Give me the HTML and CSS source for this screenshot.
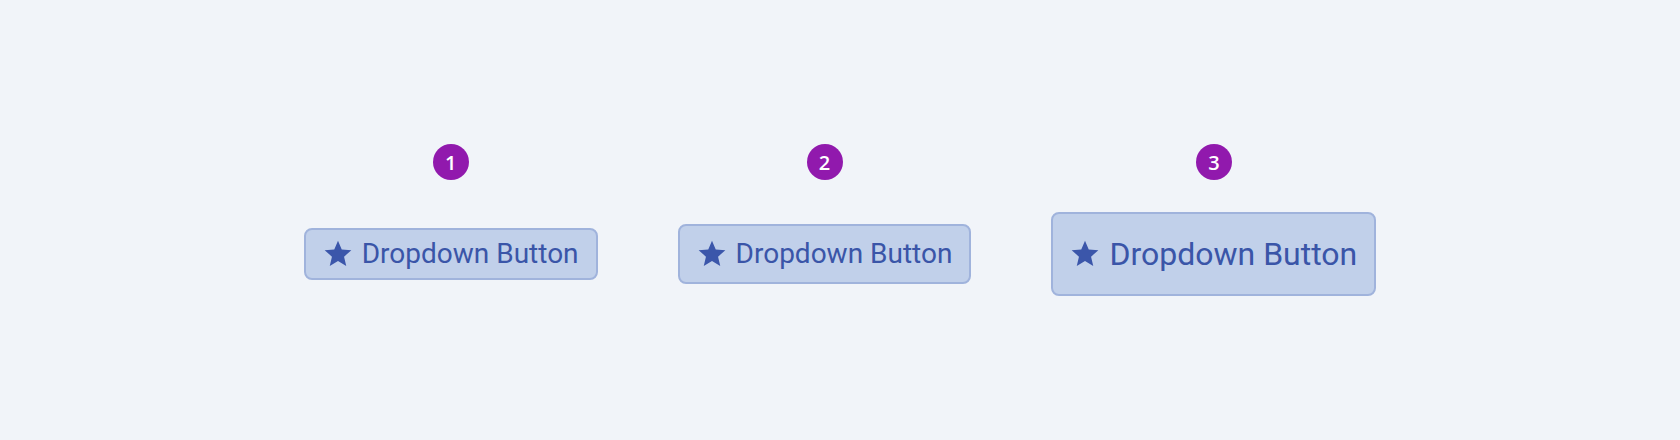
FILE: index.html
```html
<!DOCTYPE html>
<html lang="en">
<head>
    <meta charset="UTF-8">
    <meta name="viewport" content="width=device-width, initial-scale=1.0">
    <title>Dropdown Button sizes</title>
    <link rel="stylesheet" href="styles.css">
</head>
<body>
    <div class="demo">
        <span class="badge">1</span>
        <span class="badge">2</span>
        <span class="badge">3</span>

        <button class="dd-btn dd-small">
            <svg class="star" viewBox="0 0 24 24"><path d="M12 17.27L18.18 21l-1.64-7.03L22 9.24l-7.19-.61L12 2 9.19 8.63 2 9.24l5.46 4.73L5.82 21z"/></svg>
            <span>Dropdown Button</span>
        </button>
        <button class="dd-btn dd-medium">
            <svg class="star" viewBox="0 0 24 24"><path d="M12 17.27L18.18 21l-1.64-7.03L22 9.24l-7.19-.61L12 2 9.19 8.63 2 9.24l5.46 4.73L5.82 21z"/></svg>
            <span>Dropdown Button</span>
        </button>
        <button class="dd-btn dd-large">
            <svg class="star" viewBox="0 0 24 24"><path d="M12 17.27L18.18 21l-1.64-7.03L22 9.24l-7.19-.61L12 2 9.19 8.63 2 9.24l5.46 4.73L5.82 21z"/></svg>
            <span>Dropdown Button</span>
        </button>
    </div>
</body>
</html>
```
FILE: styles.css
```css
*{
    margin: 0;
    padding: 0;
    box-sizing: border-box;
}
body{
    height: 440px;
    background-color: #f1f4f9;
    display: flex;
    align-items: center;
    justify-content: center;
    font-family: Roboto, "Liberation Sans", sans-serif;
}
.demo{
    display: grid;
    grid-template-columns: auto auto auto;
    column-gap: 80px;
    row-gap: 32px;
    justify-items: center;
    align-items: center;
}
.badge{
    width: 36px;
    height: 36px;
    border-radius: 50%;
    background-color: #9119ad;
    color: #fff;
    font-family: "Open Sans", "Noto Sans", sans-serif;
    font-size: 20px;
    font-weight: 600;
    display: flex;
    align-items: center;
    justify-content: center;
}
.dd-btn{
    display: inline-flex;
    align-items: center;
    gap: 8px;
    padding: 0 17px 0 16px;
    border: 2px solid #a0b3dc;
    border-radius: 8px;
    background-color: #c1d0ea;
    color: #3a55a8;
    font-family: Roboto, "Liberation Sans", sans-serif;
    font-size: 28px;
    line-height: 1;
    white-space: nowrap;
}
.star{
    width: 32px;
    height: 32px;
    fill: #3b56aa;
    flex: none;
}
.dd-small{
    height: 52px;
}
.dd-medium{
    height: 60px;
}
.dd-large{
    height: 84px;
    font-size: 32px;
}
```
